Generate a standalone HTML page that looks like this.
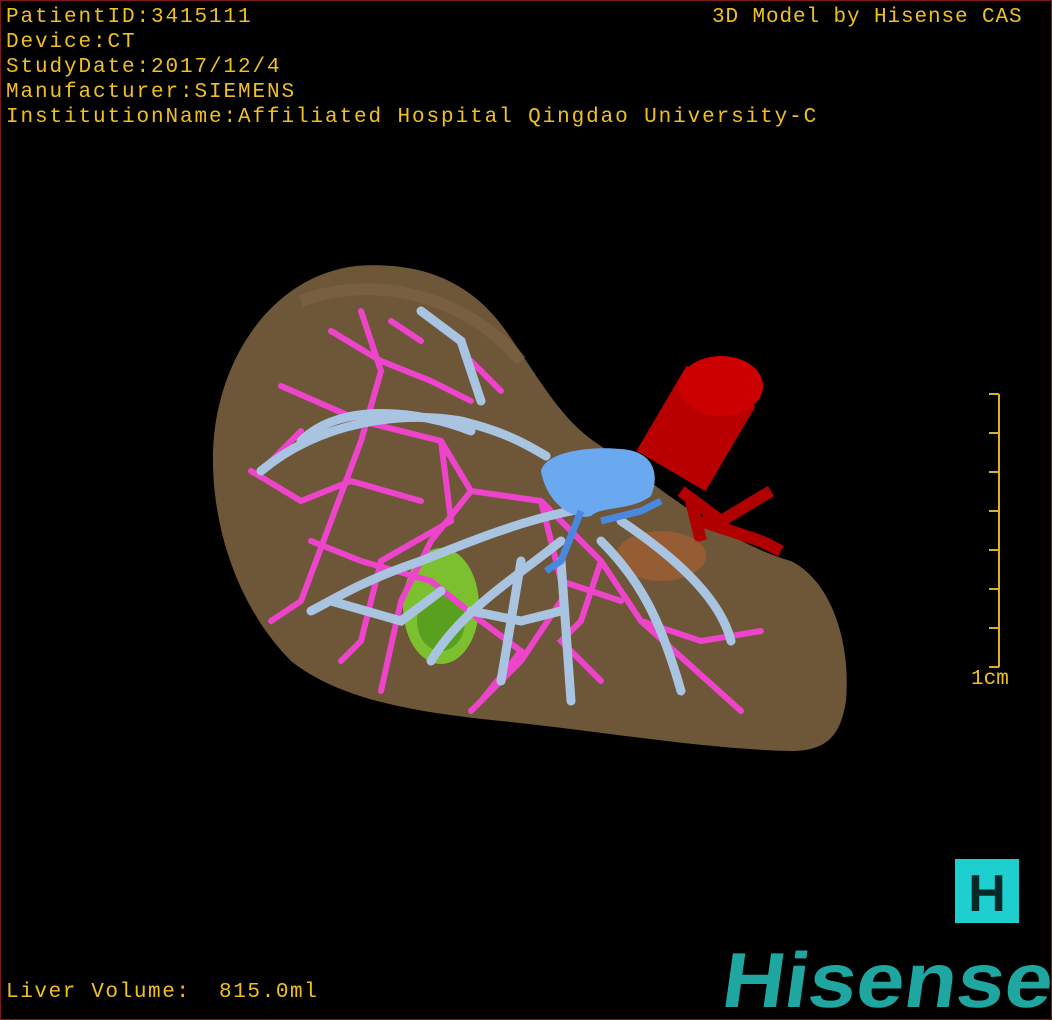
<!DOCTYPE html>
<html><head><meta charset="utf-8"><style>
html,body{margin:0;padding:0;background:#000;}
#c{position:relative;width:1050px;height:1018px;border:1px solid #7a1a1a;background:#000;overflow:hidden;font-family:"Liberation Mono","Noto Sans CJK SC",monospace;color:#f0c020;}
.t{position:absolute;font-size:21px;line-height:25px;white-space:pre;letter-spacing:1.9px;}
</style></head><body><div id="c">
<div class="t" style="left:5px;top:4px">PatientID:3415111<br>Device:CT<br>StudyDate:2017/12/4<br>Manufacturer:SIEMENS<br>InstitutionName:Affiliated Hospital Qingdao University-C</div>
<div class="t" style="left:711px;top:4px;letter-spacing:0.9px">3D Model by Hisense CAS</div>
<div class="t" style="left:5px;top:979px;letter-spacing:1.6px">Liver Volume:  815.0ml</div>
<div class="t" style="left:970px;top:666px;letter-spacing:0">1cm</div>
<svg width="1050" height="1018" style="position:absolute;left:0;top:0">
<g stroke="#e0b020" stroke-width="2" fill="none">
<path d="M998 393V666M988 393H998M988 432H998M988 471H998M988 510H998M988 549H998M988 588H998M988 627H998M988 666H998"/>
</g>
<path d="M355 265C420 260 470 280 505 330C540 380 560 420 600 445C650 480 720 540 790 560C830 580 850 640 845 700C840 730 830 750 790 750C700 748 600 730 500 720C420 712 340 700 290 660C240 610 210 530 212 450C215 360 270 275 355 265Z" fill="#6e5638"/>
<path d="M300 300C380 270 470 300 520 360" stroke="#826848" stroke-width="12" fill="none" opacity=".5"/>
<ellipse cx="440" cy="605" rx="38" ry="58" fill="#7cc030"/>
<ellipse cx="440" cy="620" rx="24" ry="30" fill="#5aa020"/>
<path d="M720 385L670 470" stroke="#b80000" stroke-width="80" fill="none"/>
<ellipse cx="720" cy="385" rx="42" ry="30" fill="#cc0000"/>
<path d="M680 490L720 520L770 490M700 520L760 540L780 550M690 500L700 540" stroke="#b00000" stroke-width="12" fill="none"/>
<ellipse cx="660" cy="555" rx="45" ry="25" fill="#b06030" opacity=".6"/>
<g stroke="#ee44cc" stroke-width="6" fill="none" stroke-linecap="round">
<path d="M280 385L360 420L440 440L470 490L540 500L600 560L640 620L740 710"/>
<path d="M330 330L380 360L430 380L470 400"/>
<path d="M360 310L380 370L360 440L330 520L300 600L270 620"/>
<path d="M440 440L450 520L380 560L360 640L340 660"/>
<path d="M470 490L430 540L400 600L380 690"/>
<path d="M600 560L580 620L560 640L600 680M640 620L700 640L760 630"/>
<path d="M540 500L560 580L620 600M250 470L300 500L350 480L420 500"/>
<path d="M310 540L360 560L430 580L480 620L520 650L480 700"/>
<path d="M390 320L420 340M470 360L500 390M300 430L270 460M560 600L520 660L470 710"/>
</g>
<g stroke="#a8c4e0" stroke-width="9" fill="none" stroke-linecap="round">
<path d="M260 470C320 420 400 410 460 420C500 430 520 440 545 455"/>
<path d="M300 440C340 400 420 410 470 430"/>
<path d="M570 510C520 520 470 540 420 560C360 580 330 600 310 610"/>
<path d="M560 540C510 580 460 610 430 660"/>
<path d="M600 540C640 580 660 620 680 690"/>
<path d="M620 520C680 560 720 600 730 640"/>
<path d="M560 560L570 700M520 560L500 680M470 610L520 620L560 610"/>
<path d="M420 310L460 340L480 400M330 600L400 620L440 590"/>
</g>
<path d="M540 470C545 450 590 445 620 448C650 450 660 470 650 495C630 510 600 505 590 515C570 520 545 500 540 470Z" fill="#6aa8f0"/>
<path d="M580 510L560 560L545 570M600 520L640 510L660 500" stroke="#4a88e0" stroke-width="7" fill="none"/>
<rect x="954" y="858" width="64" height="64" fill="#1ecfd0"/>
<text x="986" y="910" font-family="Liberation Sans,sans-serif" font-size="52" text-anchor="middle" fill="#062828" font-weight="bold">H</text>
<text x="720" y="1006" font-family="Liberation Sans,sans-serif" font-size="78" font-weight="bold" fill="#1fa6a0" textLength="330" lengthAdjust="spacingAndGlyphs" transform="skewX(-8) translate(140 0)">Hisense</text>
</svg>
</div></body></html>
